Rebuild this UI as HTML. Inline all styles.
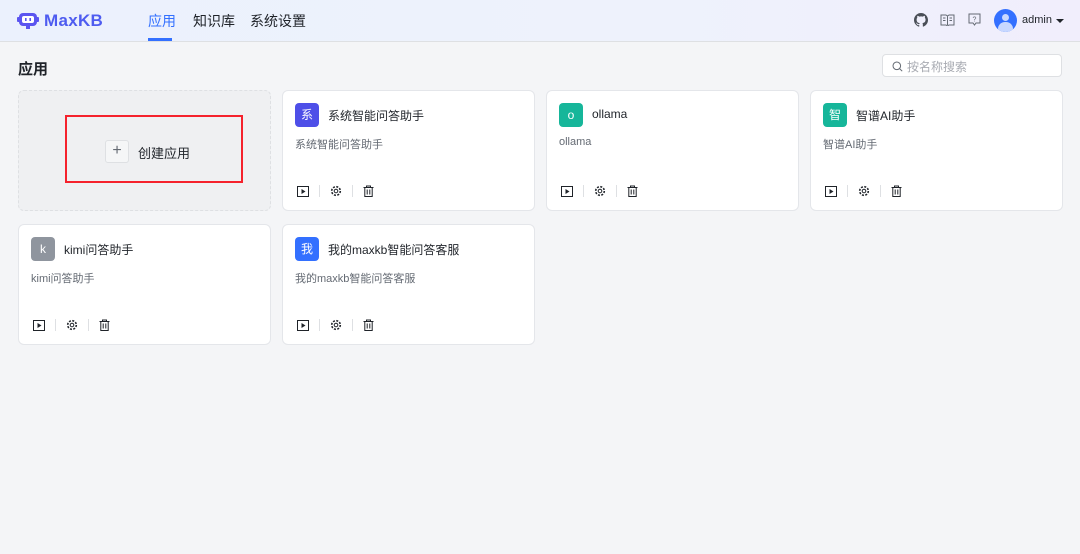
<!DOCTYPE html>
<html><head><meta charset="utf-8"><style>
*{box-sizing:border-box;margin:0;padding:0}
body{width:1080px;height:554px;background:#f4f5f7;font-family:"Liberation Sans","Noto Sans CJK SC",sans-serif;position:relative;overflow:hidden;color:#1f2329}
.hdr{position:absolute;left:0;top:0;width:1080px;height:42px;background:linear-gradient(90deg,#ebf1fd 0%,#eef2fc 60%,#f1eefc 100%);border-bottom:1px solid #dee0e3}
.logo{position:absolute;left:17px;top:11px;display:flex;align-items:center;gap:5px;font-weight:900;font-size:17px;color:#4e5cf0;letter-spacing:0.3px}
.nav{position:absolute;top:11px;font-size:14px;color:#1f2329}
.nav.act{color:#3370ff}
.uline{position:absolute;left:148px;top:38px;width:24px;height:3px;background:#3370ff}
h1{position:absolute;left:18px;top:58px;font-size:15px;font-weight:bold}
.search{position:absolute;left:882px;top:54px;width:180px;height:23px;background:#fff;border:1px solid #dee0e3;border-radius:4px;font-size:12px;color:#a8abb2;padding:3px 0 0 24px}
.card{position:absolute;width:253px;height:121px;background:#fff;border:1px solid #e4e6ea;border-radius:6px}
.av{position:absolute;left:12px;top:12px;width:24px;height:24px;border-radius:4px;color:#fff;font-size:12px;text-align:center;line-height:24px}
.t{position:absolute;left:45px;top:16px;font-size:12px;color:#1f2329}
.d{position:absolute;left:12px;top:45px;font-size:11px;color:#646a73}
.acts{position:absolute;left:14px;top:94px;display:flex;align-items:center}
.acts svg{display:block}
.sep{width:1px;height:12px;background:#dee0e3;margin:0 10px}
</style></head><body>
<div class="hdr">
 <div class="logo"><svg width="22" height="18" viewBox="0 0 22 18"><rect x="2" y="1" width="18" height="13" rx="4" fill="#5b55f0"/><rect x="0" y="5" width="3" height="5" rx="1" fill="#5b55f0"/><rect x="19" y="5" width="3" height="5" rx="1" fill="#5b55f0"/><rect x="5" y="4" width="12" height="7" rx="2" fill="#fff"/><rect x="8" y="6" width="1.6" height="3" fill="#5b55f0"/><rect x="12.4" y="6" width="1.6" height="3" fill="#5b55f0"/><rect x="9" y="14" width="4" height="3" fill="#5b55f0"/></svg><span>MaxKB</span></div>
 <div class="nav act" style="left:148px">应用</div>
 <div class="nav" style="left:193px">知识库</div>
 <div class="nav" style="left:250px">系统设置</div>
 <div class="uline"></div>
 <svg style="position:absolute;left:914px;top:13px" width="14" height="14" viewBox="0 0 16 16"><path fill="#4a4f57" d="M8 0C3.6 0 0 3.6 0 8c0 3.5 2.3 6.5 5.5 7.6.4.1.5-.2.5-.4v-1.4c-2.2.5-2.7-1-2.7-1-.4-.9-.9-1.2-.9-1.2-.7-.5.1-.5.1-.5.8.1 1.2.8 1.2.8.7 1.3 1.9.9 2.4.7.1-.5.3-.9.5-1.1-1.8-.2-3.600-.9-3.6-4 0-.9.3-1.6.8-2.1-.1-.2-.4-1 .1-2.1 0 0 .7-.2 2.2.8.6-.2 1.3-.3 2-.3s1.4.1 2 .3c1.5-1 2.2-.8 2.2-.8.4 1.1.2 1.9.1 2.1.5.6.8 1.3.8 2.1 0 3.1-1.9 3.7-3.6 3.9.3.3.5.8.5 1.5v2.2c0 .2.1.5.6.4C13.7 14.5 16 11.5 16 8c0-4.4-3.6-8-8-8z"/></svg>
 <svg style="position:absolute;left:940px;top:14px" width="15" height="12" viewBox="0 0 15 12"><path d="M1 1h5l1.5 1 1.5-1h5v10H9l-1.5 1L6 11H1z M7.5 2v9 M3 4h2.5M3 6.5h2.5M9.5 4H12M9.5 6.5H12" fill="none" stroke="#646a73" stroke-width="1"/></svg>
 <svg style="position:absolute;left:968px;top:13px" width="13" height="14" viewBox="0 0 13 14"><path d="M1 1h11v9H8l-1.5 2L5 10H1z" fill="none" stroke="#646a73"/><text x="6.5" y="8.5" font-size="7" text-anchor="middle" fill="#646a73" font-family="Liberation Sans">?</text></svg>
 <div style="position:absolute;left:994px;top:9px;width:23px;height:23px;border-radius:50%;background:#3370ff;overflow:hidden"><div style="position:absolute;left:8px;top:5px;width:7px;height:7px;border-radius:50%;background:#c8d8ff"></div><div style="position:absolute;left:4px;top:13px;width:15px;height:10px;border-radius:7px 7px 0 0;background:#c8d8ff"></div></div>
 <div style="position:absolute;left:1022px;top:14px;font-size:11px;color:#1f2329">admin</div>
 <div style="position:absolute;left:1056px;top:19px;width:0;height:0;border-left:4px solid transparent;border-right:4px solid transparent;border-top:4px solid #1f2329"></div>
</div>
<h1>应用</h1>
<div class="search"><svg style="position:absolute;left:9px;top:6px" width="11" height="11" viewBox="0 0 11 11"><circle cx="4.8" cy="4.8" r="3.8" fill="none" stroke="#646a73"/><path d="M7.6 7.6l2.6 2.6" stroke="#646a73"/></svg>按名称搜索</div>

<div class="card" style="left:18px;top:90px;background:#eff0f2;border:1px dashed #dee0e3">
 <div style="position:absolute;left:46px;top:24px;width:178px;height:68px;border:2px solid #f5222d"></div>
 <div style="position:absolute;left:86px;top:49px;width:24px;height:23px;border:1px solid #dee0e3;border-radius:3px;background:#f5f6f7;text-align:center;line-height:20px;font-size:16px;color:#646a73">+</div>
 <div style="position:absolute;left:119px;top:52px;font-size:13px;color:#1f2329">创建应用</div>
</div>

<div class="card" style="left:282px;top:90px"><div class="av" style="background:#4e4fe8">系</div><div class="t">系统智能问答助手</div><div class="d">系统智能问答助手</div><div class="acts">A</div></div>
<div class="card" style="left:546px;top:90px"><div class="av" style="background:#16b69a">o</div><div class="t" style="top:16px">ollama</div><div class="d">ollama</div><div class="acts">A</div></div>
<div class="card" style="left:810px;top:90px"><div class="av" style="background:#16b69a">智</div><div class="t">智谱AI助手</div><div class="d">智谱AI助手</div><div class="acts">A</div></div>
<div class="card" style="left:18px;top:224px"><div class="av" style="background:#8f959e">k</div><div class="t">kimi问答助手</div><div class="d">kimi问答助手</div><div class="acts">A</div></div>
<div class="card" style="left:282px;top:224px"><div class="av" style="background:#3370ff">我</div><div class="t">我的maxkb智能问答客服</div><div class="d">我的maxkb智能问答客服</div><div class="acts">A</div></div>
<script>
var h='<svg width="12" height="11" viewBox="0 0 12 11"><rect x="0.5" y="0.5" width="11" height="10" fill="none" stroke="#1f2329"/><path d="M4.5 3v5l4-2.5z" fill="#1f2329"/></svg><div class="sep"></div><svg width="12" height="12" viewBox="0 0 12 12"><circle cx="6" cy="6" r="4.3" fill="none" stroke="#1f2329" stroke-width="1.6" stroke-dasharray="2 1.4"/><circle cx="6" cy="6" r="1.8" fill="none" stroke="#1f2329"/></svg><div class="sep"></div><svg width="11" height="12" viewBox="0 0 11 12"><path d="M0.5 2.5h10M3.5 2.5V1h4v1.5M1.8 2.5v9h7.4v-9M4.2 4.5v5M6.8 4.5v5" fill="none" stroke="#1f2329"/></svg>';
document.querySelectorAll('.acts').forEach(function(e){e.innerHTML=h});
</script>
</body></html>
